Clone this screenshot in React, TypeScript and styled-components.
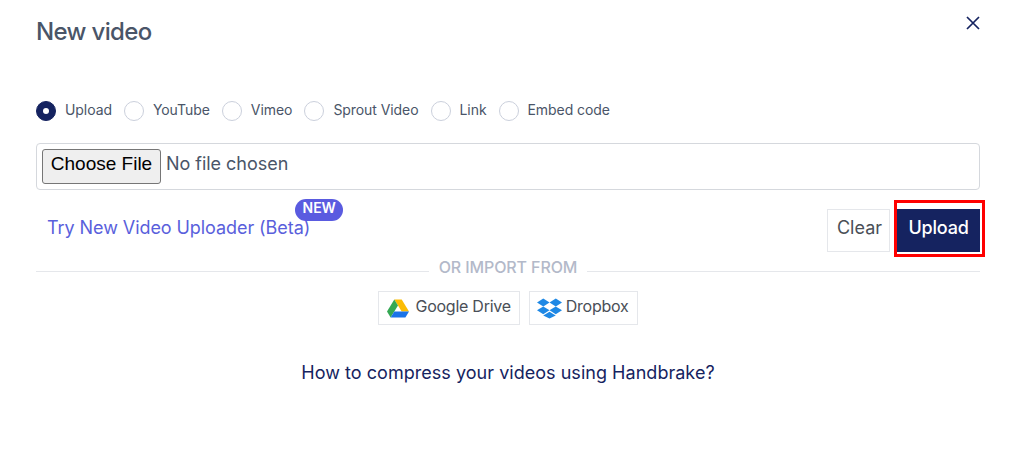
import React, { useState } from 'react';
import styled, { createGlobalStyle } from 'styled-components';

const GlobalStyle = createGlobalStyle`
  html, body {
    margin: 0;
    padding: 0;
    background: white;
    font-family: Inter, 'Liberation Sans', sans-serif;
  }
`;

const Modal = styled.div`
  width: 1014px;
  height: 468px;
  box-sizing: border-box;
  padding: 0 34px 0 36px;
  position: relative;
  overflow: hidden;
`;

const Header = styled.div`
  height: 101px;
  display: flex;
  align-items: flex-start;
`;

const Title = styled.h2`
  margin: 17px 0 0;
  font-size: 24px;
  line-height: 30px;
  font-weight: 500;
  color: #4a5568;
  letter-spacing: -0.65px;
`;

const CloseButton = styled.button`
  position: absolute;
  top: 15px;
  right: 33px;
  width: 16px;
  height: 16px;
  padding: 0;
  border: none;
  background: none;
  color: #152360;
  cursor: pointer;
`;

const RadioRow = styled.div`
  display: flex;
  align-items: center;
  height: 20px;
`;

const RadioOption = styled.label`
  display: flex;
  align-items: center;
  gap: 9px;
  margin-right: 12px;
  font-size: 14px;
  color: #4a5568;
  letter-spacing: -0.07px;
  cursor: pointer;
`;

const RadioText = styled.span`
  margin-bottom: 3px;
`;

const RadioDot = styled.span<{ checked?: boolean }>`
  width: 20px;
  height: 20px;
  box-sizing: border-box;
  border-radius: 50%;
  display: flex;
  align-items: center;
  justify-content: center;
  background: ${({ checked }) => (checked ? '#152360' : 'white')};
  border: 1px solid ${({ checked }) => (checked ? '#152360' : '#cbd0dc')};

  &::after {
    content: '';
    width: 6px;
    height: 6px;
    border-radius: 50%;
    background: ${({ checked }) => (checked ? 'white' : 'transparent')};
  }
`;

const FileBox = styled.div`
  margin-top: 22px;
  height: 47px;
  box-sizing: border-box;
  border: 1px solid #d5d8dd;
  border-radius: 4px;
  padding: 5px;
  display: flex;
  align-items: flex-start;
`;

const FileInput = styled.input`
  width: 100%;
  font-family: Inter, sans-serif;
  font-size: 18px;
  color: #4a5568;
  letter-spacing: -0.03px;

  &::file-selector-button {
    width: 119px;
    height: 35px;
    margin-right: 5px;
    padding: 0 0 6px;
    font-family: 'Liberation Sans', Arial, sans-serif;
    font-size: 19px;
    letter-spacing: 0;
    color: black;
    background: #efefef;
    border: 1px solid #767676;
    border-radius: 3px;
  }
`;

const ActionRow = styled.div`
  margin-top: 19px;
  height: 43px;
  display: flex;
  align-items: center;
  justify-content: space-between;
`;

const BetaLink = styled.a`
  position: relative;
  margin-left: 11px;
  margin-bottom: 6px;
  font-size: 18px;
  color: #5a5fdc;
  letter-spacing: -0.07px;
  text-decoration: none;
`;

const NewBadge = styled.span`
  position: absolute;
  top: -18px;
  right: -33px;
  width: 48px;
  height: 22px;
  border-radius: 11px;
  background: #5a5be0;
  color: white;
  font-size: 14px;
  font-weight: 600;
  line-height: 17px;
  text-align: center;
`;

const Actions = styled.div`
  display: flex;
  gap: 7px;
`;

const ActionButton = styled.button<{ primary?: boolean }>`
  position: relative;
  height: 43px;
  width: ${({ primary }) => (primary ? '83px' : '63px')};
  padding: 0 0 6px ${({ primary }) => (primary ? '0' : '2px')};
  font-family: Inter, sans-serif;
  font-size: 18px;
  font-weight: ${({ primary }) => (primary ? 500 : 400)};
  letter-spacing: ${({ primary }) => (primary ? '-0.2px' : '0')};
  color: ${({ primary }) => (primary ? 'white' : '#4a4f57')};
  background: ${({ primary }) => (primary ? '#152360' : 'white')};
  border: ${({ primary }) => (primary ? 'none' : '1px solid #e5e7eb')};
  cursor: pointer;
`;

// red annotation frame that lies over the upload button
const Highlight = styled.span`
  position: absolute;
  top: -9px;
  left: -3px;
  right: -5px;
  bottom: -5px;
  border: 3px solid #ff0000;
  pointer-events: none;
`;

const Divider = styled.div`
  margin-top: 9px;
  height: 20px;
  display: flex;
  align-items: center;
  gap: 10px;

  &::before,
  &::after {
    content: '';
    flex: 1;
    height: 1px;
    background: #e5e7eb;
  }
`;

const DividerText = styled.span`
  margin-bottom: 8px;
  font-size: 16px;
  font-weight: 500;
  color: #b3b9c9;
  letter-spacing: -0.1px;
`;

const ImportRow = styled.div`
  margin-top: 10px;
  display: flex;
  justify-content: center;
  gap: 9px;
`;

const ImportButton = styled.button<{ tight?: boolean }>`
  height: 34px;
  box-sizing: border-box;
  display: flex;
  align-items: center;
  gap: ${({ tight }) => (tight ? '4px' : '6px')};
  padding: 0 8px 0 ${({ tight }) => (tight ? '7px' : '8px')};
  font-family: Inter, sans-serif;
  font-size: 16px;
  color: #4a4f57;
  letter-spacing: -0.25px;
  background: white;
  border: 1px solid #e5e7eb;
  cursor: pointer;
`;

const ImportLabel = styled.span`
  margin-bottom: 5px;
`;

const HelpLink = styled.a`
  display: block;
  margin-top: 36px;
  text-align: center;
  font-size: 18px;
  line-height: 24px;
  color: #152360;
  letter-spacing: 0.03px;
  text-decoration: none;
`;

const CloseIcon = () => (
  <svg width="16" height="16" viewBox="0 0 16 16" fill="none" stroke="currentColor" strokeWidth="1.7">
    <path d="M2 2l12 12M14 2L2 14" />
  </svg>
);

const DriveIcon = () => (
  <svg width="22" height="19" viewBox="0 0 22 18">
    <path d="M7.3 0h7.4l7.3 12h-7.3z" fill="#fbbc04" />
    <path d="M7.3 0L0 12l3.6 6L11 6z" fill="#34a853" />
    <path d="M7.3 12H22l-3.6 6H3.6z" fill="#1a73e8" />
  </svg>
);

const DropboxIcon = () => (
  <svg width="25" height="21" viewBox="0 0 26 21" fill="#1e88e5">
    <path d="M6.5 0L0 4.2l6.5 4.1L13 4.2z" />
    <path d="M19.5 0L13 4.2l6.5 4.1L26 4.2z" />
    <path d="M0 12.4l6.5 4.1 6.5-4.1-6.5-4.1z" />
    <path d="M19.5 8.3L13 12.4l6.5 4.1 6.5-4.1z" />
    <path d="M6.5 17.9L13 21l6.5-3.1L13 13.8z" />
  </svg>
);

const sources = ['Upload', 'YouTube', 'Vimeo', 'Sprout Video', 'Link', 'Embed code'];

const App = () => {
  const [source, setSource] = useState('Upload');

  return (
    <Modal>
      <GlobalStyle />
      <Header>
        <Title>New video</Title>
        <CloseButton>
          <CloseIcon />
        </CloseButton>
      </Header>

      <RadioRow>
        {sources.map((name) => (
          <RadioOption key={name} onClick={() => setSource(name)}>
            <RadioDot checked={source === name} />
            <RadioText>{name}</RadioText>
          </RadioOption>
        ))}
      </RadioRow>

      <FileBox>
        <FileInput type="file" />
      </FileBox>

      <ActionRow>
        <BetaLink href="#">
          Try New Video Uploader (Beta)
          <NewBadge>NEW</NewBadge>
        </BetaLink>
        <Actions>
          <ActionButton>Clear</ActionButton>
          <ActionButton primary>
            Upload
            <Highlight />
          </ActionButton>
        </Actions>
      </ActionRow>

      <Divider>
        <DividerText>OR IMPORT FROM</DividerText>
      </Divider>

      <ImportRow>
        <ImportButton>
          <DriveIcon />
          <ImportLabel>Google Drive</ImportLabel>
        </ImportButton>
        <ImportButton tight>
          <DropboxIcon />
          <ImportLabel>Dropbox</ImportLabel>
        </ImportButton>
      </ImportRow>

      <HelpLink href="#">How to compress your videos using Handbrake?</HelpLink>
    </Modal>
  );
};

export default App;
